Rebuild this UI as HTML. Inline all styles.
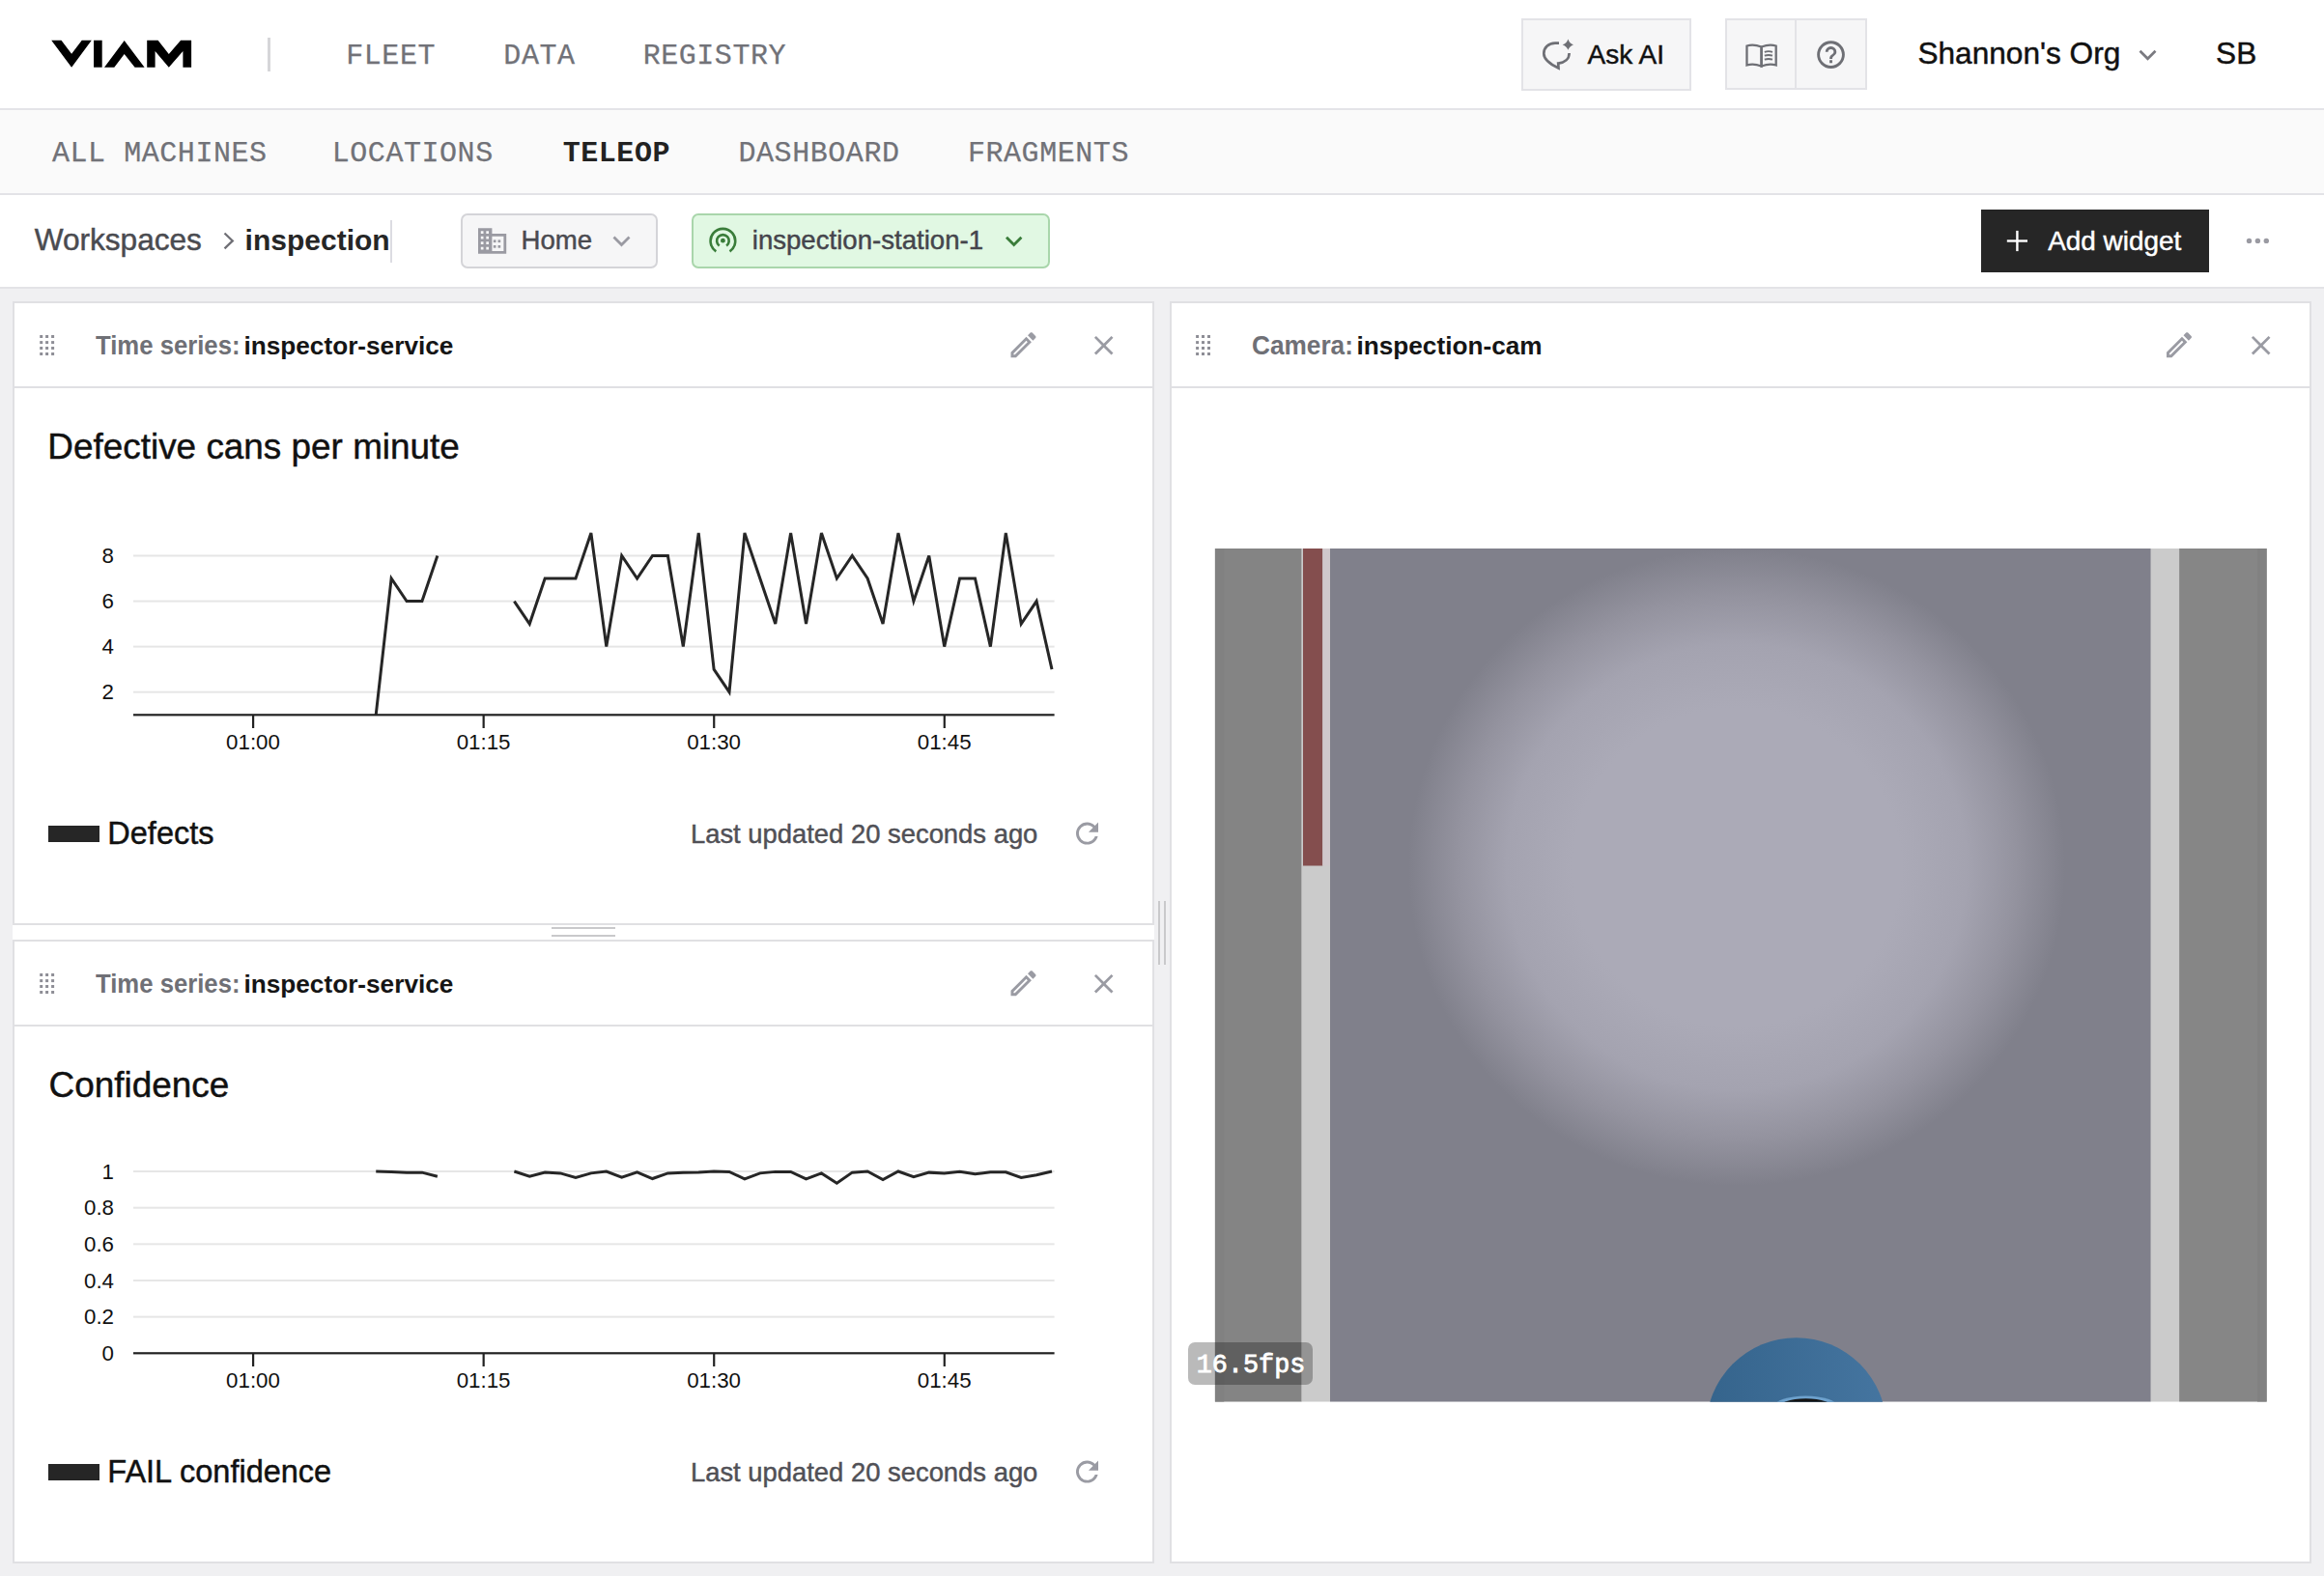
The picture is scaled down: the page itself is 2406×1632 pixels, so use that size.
<!DOCTYPE html>
<html><head><meta charset="utf-8"><title>Teleop</title>
<style>
html,body{margin:0;padding:0;width:2406px;height:1632px;overflow:hidden;background:#f0f0f2;}
.b{position:absolute;}
.t{position:absolute;white-space:pre;}
svg text{font-family:"Liberation Sans", sans-serif;}
</style></head><body>
<div class="b" style="left:0px;top:0px;width:2406px;height:112px;background:#fff"></div><div class="b" style="left:0px;top:112px;width:2406px;height:2px;background:#e4e4e8"></div><div class="b" style="left:0px;top:114px;width:2406px;height:86px;background:#fafafa"></div><div class="b" style="left:0px;top:200px;width:2406px;height:2px;background:#e3e3e7"></div><div class="b" style="left:0px;top:202px;width:2406px;height:95px;background:#fff"></div><div class="b" style="left:0px;top:297px;width:2406px;height:2px;background:#e3e3e7"></div><div class="b" style="left:0px;top:299px;width:2406px;height:1333px;background:#f0f0f2"></div><div class="b" style="left:13px;top:312px;width:1182px;height:646px;background:#fff;border:2px solid #e0e0e3;box-sizing:border-box"></div><div class="b" style="left:15px;top:400px;width:1178px;height:2px;background:#e0e0e3"></div><div class="b" style="left:13px;top:973px;width:1182px;height:646px;background:#fff;border:2px solid #e0e0e3;box-sizing:border-box"></div><div class="b" style="left:15px;top:1061px;width:1178px;height:2px;background:#e0e0e3"></div><div class="b" style="left:1211px;top:312px;width:1182px;height:1307px;background:#fff;border:2px solid #e0e0e3;box-sizing:border-box"></div><div class="b" style="left:1213px;top:400px;width:1178px;height:2px;background:#e0e0e3"></div><div class="b" style="left:13px;top:958px;width:1182px;height:15px;background:#fff"></div><div class="b" style="left:571px;top:960px;width:66px;height:2px;background:#c9c9cb"></div><div class="b" style="left:571px;top:968px;width:66px;height:2px;background:#c9c9cb"></div><div class="b" style="left:1199px;top:933px;width:2px;height:66px;background:#c9c9cb"></div><div class="b" style="left:1205px;top:933px;width:2px;height:66px;background:#c9c9cb"></div><div class="b" style="left:277px;top:39px;width:3px;height:35px;background:#d6d6d9"></div><div class="b" style="left:1575px;top:19px;width:176px;height:75px;background:#f6f6f7;border:2px solid #e3e3e7;box-sizing:border-box"></div><div class="b" style="left:1786px;top:19px;width:147px;height:74px;background:#f6f6f7;border:2px solid #e3e3e7;box-sizing:border-box"></div><div class="b" style="left:1858px;top:21px;width:2px;height:70px;background:#e3e3e7"></div><div class="b" style="left:404px;top:228px;width:2px;height:44px;background:#dcdce2"></div><div class="b" style="left:477px;top:221px;width:204px;height:57px;background:#f6f6f7;border:2px solid #d4d4d8;border-radius:7px;box-sizing:border-box"></div><div class="b" style="left:716px;top:221px;width:371px;height:57px;background:#e1f8e3;border:2px solid #a9d6ab;border-radius:7px;box-sizing:border-box"></div><div class="b" style="left:2051px;top:217px;width:236px;height:65px;background:#262626"></div><div class="b" style="left:50px;top:855px;width:53px;height:17px;background:#262626"></div><div class="b" style="left:50px;top:1516px;width:53px;height:17px;background:#262626"></div>
<svg width="2406" height="1632" viewBox="0 0 2406 1632" style="position:absolute;left:0;top:0">
<polygon fill="#000" points="53.2,41.75 63.5,41.75 74.1,55.7 84.75,41.75 94.8,41.75 74.1,69.7"/><rect fill="#000" x="97.06" y="41.75" width="8.64" height="27.95"/><polygon fill="#000" points="108.0,69.7 128.7,42.1 149.6,69.7 139.6,69.7 128.7,56 118.3,69.7"/><polygon fill="#000" points="152.2,69.7 152.2,41.75 163.6,41.75 174.8,56 187.1,41.75 198.1,41.75 198.1,69.7 189.4,69.7 189.4,52.9 174.8,69.7 160.6,52.9 160.6,69.7"/><g fill="none" stroke="#6e6f75" stroke-width="2.7" stroke-linejoin="miter"><path d="M1614,44.7 L1610,44.7 C1603,44.7 1598.3,49.5 1598.3,55.5 C1598.3,62 1605,66.5 1613.5,70.5 L1613.2,65.6 C1620,65 1624.6,61 1624.6,55"/></g><path fill="#6e6f75" d="M1623.4,40.4 Q1624.9,44.8 1629,46.3 Q1624.9,47.8 1623.4,51.8 Q1621.9,47.8 1617.6,46.3 Q1621.9,44.8 1623.4,40.4 Z"/><g fill="none" stroke="#6e6f75" stroke-width="2.3"><path d="M1808.5,47.5 Q1815.5,45.5 1823.5,48.5 L1823.5,68.5 Q1815.5,65.5 1808.5,67.5 Z"/><path d="M1838.7,47.5 Q1831.7,45.5 1823.7,48.5 L1823.7,68.5 Q1831.7,65.5 1838.7,67.5 Z"/><path d="M1826.8,53.8 Q1831,52.5 1835,53.8 M1826.8,57.7 Q1831,56.4 1835,57.7 M1826.8,61.6 Q1831,60.3 1835,61.6" stroke-width="1.9"/></g><g transform="translate(1878.3,39.4) scale(1.435)"><path fill="#6e6f75" d="M11,18H13V16H11V18M12,2A10,10 0 0,0 2,12A10,10 0 0,0 12,22A10,10 0 0,0 22,12A10,10 0 0,0 12,2M12,20C7.590,20 4,16.41 4,12C4,7.59 7.59,4 12,4C16.41,4 20,7.59 20,12C20,16.41 16.41,20 12,20M12,6A4,4 0 0,0 8,10H10A2,2 0 0,1 12,8A2,2 0 0,1 14,10C14,12 11,11.75 11,15H13C13,12.75 16,12.5 16,10A4,4 0 0,0 12,6Z"/></g><polyline fill="none" stroke="#7a7a80" stroke-width="2.7" points="2215.5,52.8 2223.5,60.8 2231.5,52.8"/><polyline fill="none" stroke="#707076" stroke-width="2.3" points="232.5,241.5 240.8,249.4 232.5,257.3"/><g fill="#9a9aa2"><path fill-rule="evenodd" d="M495,236.3 H509.4 V242 H524.2 V262.7 H495 Z M497.8,239.2 H500.5 V241.9 H497.8 Z M503.3,239.2 H506 V241.9 H503.3 Z M497.8,244.7 H500.5 V247.4 H497.8 Z M503.3,244.7 H506 V247.4 H503.3 Z M497.8,250.2 H500.5 V252.9 H497.8 Z M503.3,250.2 H506 V252.9 H503.3 Z M497.8,255.7 H500.5 V258.4 H497.8 Z M503.3,255.7 H506 V258.4 H503.3 Z M509.4,244.8 H521.4 V259.9 H509.4 Z"/><rect x="510.8" y="248.4" width="2.7" height="2.7"/><rect x="515.5" y="248.4" width="2.7" height="2.7"/><rect x="510.8" y="254" width="2.7" height="2.7"/><rect x="515.5" y="254" width="2.7" height="2.7"/></g><polyline fill="none" stroke="#9a9aa2" stroke-width="2.8" points="635.5,245.5 643.5,253.6 651.5,245.5"/><g fill="none" stroke="#3a7d3a" stroke-width="2.6" stroke-linecap="butt"><path d="M741.3,260.3 A12.8,12.8 0 1 1 755.5,260.3"/><path d="M744.7,254.5 A6.3,6.3 0 1 1 752.1,254.5"/></g><circle cx="748.4" cy="249.2" r="2.4" fill="#3a7d3a"/><polyline fill="none" stroke="#3a7d3a" stroke-width="2.9" points="1042,245.8 1049.7,253.5 1057.4,245.8"/><g stroke="#fff" stroke-width="2.4"><line x1="2077.8" y1="249.5" x2="2099" y2="249.5"/><line x1="2088.4" y1="238.9" x2="2088.4" y2="260.1"/></g><g fill="#9a9aa2"><circle cx="2328.5" cy="249.4" r="2.7"/><circle cx="2337.4" cy="249.4" r="2.7"/><circle cx="2346.3" cy="249.4" r="2.7"/></g><rect x="41.2" y="347.0" width="3" height="3" fill="#8e8e96"/><rect x="41.2" y="353.1" width="3" height="3" fill="#8e8e96"/><rect x="41.2" y="359.0" width="3" height="3" fill="#8e8e96"/><rect x="41.2" y="365.0" width="3" height="3" fill="#8e8e96"/><rect x="47.1" y="347.0" width="3" height="3" fill="#8e8e96"/><rect x="47.1" y="353.1" width="3" height="3" fill="#8e8e96"/><rect x="47.1" y="359.0" width="3" height="3" fill="#8e8e96"/><rect x="47.1" y="365.0" width="3" height="3" fill="#8e8e96"/><rect x="53.1" y="347.0" width="3" height="3" fill="#8e8e96"/><rect x="53.1" y="353.1" width="3" height="3" fill="#8e8e96"/><rect x="53.1" y="359.0" width="3" height="3" fill="#8e8e96"/><rect x="53.1" y="365.0" width="3" height="3" fill="#8e8e96"/><g transform="translate(1042.17,339.87) scale(1.4444)"><path fill="#9a9ba3" d="M14.06,9L15,9.94L5.92,19H5V18.08L14.06,9M17.66,3C17.41,3 17.15,3.1 16.96,3.29L15.13,5.12L18.88,8.87L20.71,7.04C21.1,6.65 21.1,6 20.71,5.63L18.37,3.29C18.17,3.09 17.92,3 17.66,3M14.06,6.19L3,17.25V21H6.75L17.81,9.94L14.06,6.19Z"/></g><g transform="translate(1125.90,340.90) scale(1.4000)"><path fill="#9a9ba3" d="M19,6.41L17.59,5L12,10.59L6.41,5L5,6.41L10.59,12L5,17.59L6.41,19L12,13.41L17.59,19L19,17.59L13.41,12L19,6.41Z"/></g><rect x="41.2" y="1008.0" width="3" height="3" fill="#8e8e96"/><rect x="41.2" y="1014.1" width="3" height="3" fill="#8e8e96"/><rect x="41.2" y="1020.0" width="3" height="3" fill="#8e8e96"/><rect x="41.2" y="1026.0" width="3" height="3" fill="#8e8e96"/><rect x="47.1" y="1008.0" width="3" height="3" fill="#8e8e96"/><rect x="47.1" y="1014.1" width="3" height="3" fill="#8e8e96"/><rect x="47.1" y="1020.0" width="3" height="3" fill="#8e8e96"/><rect x="47.1" y="1026.0" width="3" height="3" fill="#8e8e96"/><rect x="53.1" y="1008.0" width="3" height="3" fill="#8e8e96"/><rect x="53.1" y="1014.1" width="3" height="3" fill="#8e8e96"/><rect x="53.1" y="1020.0" width="3" height="3" fill="#8e8e96"/><rect x="53.1" y="1026.0" width="3" height="3" fill="#8e8e96"/><g transform="translate(1042.17,1000.87) scale(1.4444)"><path fill="#9a9ba3" d="M14.06,9L15,9.94L5.92,19H5V18.08L14.06,9M17.66,3C17.41,3 17.15,3.1 16.96,3.29L15.13,5.12L18.88,8.87L20.71,7.04C21.1,6.65 21.1,6 20.71,5.63L18.37,3.29C18.17,3.09 17.92,3 17.66,3M14.06,6.19L3,17.25V21H6.75L17.81,9.94L14.06,6.19Z"/></g><g transform="translate(1125.90,1001.90) scale(1.4000)"><path fill="#9a9ba3" d="M19,6.41L17.59,5L12,10.59L6.41,5L5,6.41L10.59,12L5,17.59L6.41,19L12,13.41L17.59,19L19,17.59L13.41,12L19,6.41Z"/></g><rect x="1238.1" y="347.0" width="3" height="3" fill="#8e8e96"/><rect x="1238.1" y="353.1" width="3" height="3" fill="#8e8e96"/><rect x="1238.1" y="359.0" width="3" height="3" fill="#8e8e96"/><rect x="1238.1" y="365.0" width="3" height="3" fill="#8e8e96"/><rect x="1244.0" y="347.0" width="3" height="3" fill="#8e8e96"/><rect x="1244.0" y="353.1" width="3" height="3" fill="#8e8e96"/><rect x="1244.0" y="359.0" width="3" height="3" fill="#8e8e96"/><rect x="1244.0" y="365.0" width="3" height="3" fill="#8e8e96"/><rect x="1250.0" y="347.0" width="3" height="3" fill="#8e8e96"/><rect x="1250.0" y="353.1" width="3" height="3" fill="#8e8e96"/><rect x="1250.0" y="359.0" width="3" height="3" fill="#8e8e96"/><rect x="1250.0" y="365.0" width="3" height="3" fill="#8e8e96"/><g transform="translate(2238.67,339.87) scale(1.4444)"><path fill="#9a9ba3" d="M14.06,9L15,9.94L5.92,19H5V18.08L14.06,9M17.66,3C17.41,3 17.15,3.1 16.96,3.29L15.13,5.12L18.88,8.87L20.71,7.04C21.1,6.65 21.1,6 20.71,5.63L18.37,3.29C18.17,3.09 17.92,3 17.66,3M14.06,6.19L3,17.25V21H6.75L17.81,9.94L14.06,6.19Z"/></g><g transform="translate(2323.90,340.90) scale(1.4000)"><path fill="#9a9ba3" d="M19,6.41L17.59,5L12,10.59L6.41,5L5,6.41L10.59,12L5,17.59L6.41,19L12,13.41L17.59,19L19,17.59L13.41,12L19,6.41Z"/></g><rect x="138" y="715.67" width="953.6" height="2" fill="#e6e6e6"/><text x="118" y="724.27" text-anchor="end" font-size="22.3" fill="#111">2</text><rect x="138" y="668.61" width="953.6" height="2" fill="#e6e6e6"/><text x="118" y="677.21" text-anchor="end" font-size="22.3" fill="#111">4</text><rect x="138" y="621.55" width="953.6" height="2" fill="#e6e6e6"/><text x="118" y="630.15" text-anchor="end" font-size="22.3" fill="#111">6</text><rect x="138" y="574.49" width="953.6" height="2" fill="#e6e6e6"/><text x="118" y="583.09" text-anchor="end" font-size="22.3" fill="#111">8</text><rect x="138" y="739.20" width="953.6" height="2.2" fill="#222"/><rect x="261.00" y="740.00" width="2.2" height="14" fill="#222"/><text x="262.00" y="775.60" text-anchor="middle" font-size="22.3" fill="#111">01:00</text><rect x="499.56" y="740.00" width="2.2" height="14" fill="#222"/><text x="500.56" y="775.60" text-anchor="middle" font-size="22.3" fill="#111">01:15</text><rect x="738.12" y="740.00" width="2.2" height="14" fill="#222"/><text x="739.12" y="775.60" text-anchor="middle" font-size="22.3" fill="#111">01:30</text><rect x="976.68" y="740.00" width="2.2" height="14" fill="#222"/><text x="977.68" y="775.60" text-anchor="middle" font-size="22.3" fill="#111">01:45</text><polyline fill="none" stroke="#262626" stroke-width="3" stroke-linejoin="miter" stroke-miterlimit="4" points="389.23,740.20 405.14,599.02 421.04,622.55 436.94,622.55 452.85,575.49"/><polyline fill="none" stroke="#262626" stroke-width="3" stroke-linejoin="miter" stroke-miterlimit="4" points="532.37,622.55 548.27,646.08 564.18,599.02 580.08,599.02 595.98,599.02 611.89,551.96 627.79,669.61 643.70,575.49 659.60,599.02 675.50,575.49 691.41,575.49 707.31,669.61 723.22,551.96 739.12,693.14 755.02,716.67 770.93,551.96 786.83,599.02 802.74,646.08 818.64,551.96 834.54,646.08 850.45,551.96 866.35,599.02 882.26,575.49 898.16,599.02 914.06,646.08 929.97,551.96 945.87,622.55 961.78,575.49 977.68,669.61 993.58,599.02 1009.49,599.02 1025.39,669.61 1041.30,551.96 1057.20,646.08 1073.10,622.55 1089.01,693.14"/><g transform="translate(1108.25,845.85) scale(1.4375)"><path fill="#9a9ba3" d="M17.65,6.35C16.2,4.9 14.21,4 12,4A8,8 0 0,0 4,12A8,8 0 0,0 12,20C15.73,20 18.84,17.450 19.73,14H17.65C16.83,16.33 14.61,18 12,18A6,6 0 0,1 6,12A6,6 0 0,1 12,6C13.66,6 15.14,6.69 16.22,7.78L13,11H20V4L17.65,6.35Z"/></g><text x="118" y="1408.90" text-anchor="end" font-size="22.3" fill="#111">0</text><rect x="138" y="1362.64" width="953.6" height="2" fill="#e6e6e6"/><text x="118" y="1371.24" text-anchor="end" font-size="22.3" fill="#111">0.2</text><rect x="138" y="1324.98" width="953.6" height="2" fill="#e6e6e6"/><text x="118" y="1333.58" text-anchor="end" font-size="22.3" fill="#111">0.4</text><rect x="138" y="1287.32" width="953.6" height="2" fill="#e6e6e6"/><text x="118" y="1295.92" text-anchor="end" font-size="22.3" fill="#111">0.6</text><rect x="138" y="1249.66" width="953.6" height="2" fill="#e6e6e6"/><text x="118" y="1258.26" text-anchor="end" font-size="22.3" fill="#111">0.8</text><rect x="138" y="1212.00" width="953.6" height="2" fill="#e6e6e6"/><text x="118" y="1220.60" text-anchor="end" font-size="22.3" fill="#111">1</text><rect x="138" y="1400.20" width="953.6" height="2.2" fill="#222"/><rect x="261.00" y="1401.00" width="2.2" height="14" fill="#222"/><text x="262.00" y="1436.60" text-anchor="middle" font-size="22.3" fill="#111">01:00</text><rect x="499.56" y="1401.00" width="2.2" height="14" fill="#222"/><text x="500.56" y="1436.60" text-anchor="middle" font-size="22.3" fill="#111">01:15</text><rect x="738.12" y="1401.00" width="2.2" height="14" fill="#222"/><text x="739.12" y="1436.60" text-anchor="middle" font-size="22.3" fill="#111">01:30</text><rect x="976.68" y="1401.00" width="2.2" height="14" fill="#222"/><text x="977.68" y="1436.60" text-anchor="middle" font-size="22.3" fill="#111">01:45</text><polyline fill="none" stroke="#262626" stroke-width="3" stroke-linejoin="miter" stroke-miterlimit="4" points="389.23,1213.00 405.14,1213.38 421.04,1214.13 436.94,1214.13 452.85,1218.27"/><polyline fill="none" stroke="#262626" stroke-width="3" stroke-linejoin="miter" stroke-miterlimit="4" points="532.37,1213.00 548.27,1218.27 564.18,1213.94 580.08,1214.88 595.98,1219.40 611.89,1214.88 627.79,1213.00 643.70,1219.21 659.60,1213.94 675.50,1220.53 691.41,1214.88 707.31,1214.32 723.22,1213.94 739.12,1213.00 755.02,1213.38 770.93,1220.91 786.83,1214.88 802.74,1213.38 818.64,1213.38 834.54,1220.91 850.45,1214.88 866.35,1225.24 882.26,1214.13 898.16,1213.00 914.06,1221.47 929.97,1213.00 945.87,1218.65 961.78,1214.13 977.68,1214.88 993.58,1213.38 1009.49,1215.82 1025.39,1213.75 1041.30,1213.75 1057.20,1219.40 1073.10,1216.77 1089.01,1213.00"/><g transform="translate(1108.25,1506.85) scale(1.4375)"><path fill="#9a9ba3" d="M17.65,6.35C16.2,4.9 14.21,4 12,4A8,8 0 0,0 4,12A8,8 0 0,0 12,20C15.73,20 18.84,17.450 19.73,14H17.65C16.83,16.33 14.61,18 12,18A6,6 0 0,1 6,12A6,6 0 0,1 12,6C13.66,6 15.14,6.69 16.22,7.78L13,11H20V4L17.65,6.35Z"/></g><defs><radialGradient id="glow" cx="0.5" cy="0.5" r="0.5"><stop offset="0" stop-color="#abaab7"/><stop offset="0.5" stop-color="#abaab7"/><stop offset="0.7" stop-color="#a4a3b0"/><stop offset="0.85" stop-color="#94939f"/><stop offset="1" stop-color="#80808b"/></radialGradient><linearGradient id="disk" x1="1766" y1="0" x2="1953" y2="0" gradientUnits="userSpaceOnUse"><stop offset="0" stop-color="#35648c"/><stop offset="1" stop-color="#4575a0"/></linearGradient><clipPath id="camclip"><rect x="1257.7" y="568" width="1089.1" height="883.7"/></clipPath></defs><g clip-path="url(#camclip)"><rect x="1257.7" y="568" width="90" height="883.7" fill="#848484"/><rect x="1347.7" y="568" width="29.3" height="883.7" fill="#cbcbcb"/><rect x="1349" y="568" width="20.3" height="328.5" fill="#844e4e"/><rect x="1369.3" y="568" width="7.7" height="328.5" fill="#d0c8cc"/><rect x="1377" y="568" width="849.8" height="883.7" fill="#80808b"/><rect x="1257.7" y="568" width="9.5" height="883.7" fill="#818181"/><ellipse cx="1798" cy="898" rx="340" ry="330" fill="url(#glow)"/><rect x="2226.8" y="568" width="29.3" height="883.7" fill="#cbcbcb"/><rect x="2256.1" y="568" width="90.7" height="883.7" fill="#868686"/><rect x="2337" y="568" width="9.8" height="883.7" fill="#818181"/><circle cx="1859.7" cy="1478.5" r="93.3" fill="url(#disk)"/><ellipse cx="1869.5" cy="1456.6" rx="33" ry="11" fill="#75aad6" fill-opacity="0.85"/><ellipse cx="1869.5" cy="1458.6" rx="29" ry="10.3" fill="#141414"/></g><rect x="1230" y="1390" width="129" height="44" rx="7" fill="#000" fill-opacity="0.27"/>
</svg>
<div class="t" style="left:358.26px;top:42.92px;font-size:30.0px;line-height:30.0px;font-weight:400;color:#717278;font-family:'Liberation Mono', monospace;letter-spacing:0.55px;-webkit-text-stroke:0.25px #717278;">FLEET</div><div class="t" style="left:521.33px;top:42.92px;font-size:30.0px;line-height:30.0px;font-weight:400;color:#717278;font-family:'Liberation Mono', monospace;letter-spacing:0.55px;-webkit-text-stroke:0.25px #717278;">DATA</div><div class="t" style="left:665.63px;top:42.92px;font-size:30.0px;line-height:30.0px;font-weight:400;color:#717278;font-family:'Liberation Mono', monospace;letter-spacing:0.55px;-webkit-text-stroke:0.25px #717278;">REGISTRY</div><div class="t" style="left:1643.55px;top:42.59px;font-size:28px;line-height:28px;font-weight:400;color:#111;font-family:'Liberation Sans', sans-serif;-webkit-text-stroke:0.45px #111;">Ask AI</div><div class="t" style="left:1985.47px;top:40.04px;font-size:31.6px;line-height:31.6px;font-weight:400;color:#111;font-family:'Liberation Sans', sans-serif;-webkit-text-stroke:0.45px #111;">Shannon's Org</div><div class="t" style="left:2294.07px;top:40.04px;font-size:31.6px;line-height:31.6px;font-weight:400;color:#111;font-family:'Liberation Sans', sans-serif;-webkit-text-stroke:0.45px #111;">SB</div><div class="t" style="left:54.00px;top:144.22px;font-size:30.0px;line-height:30.0px;font-weight:400;color:#717278;font-family:'Liberation Mono', monospace;letter-spacing:0.55px;-webkit-text-stroke:0.25px #717278;">ALL MACHINES</div><div class="t" style="left:343.73px;top:144.22px;font-size:30.0px;line-height:30.0px;font-weight:400;color:#717278;font-family:'Liberation Mono', monospace;letter-spacing:0.55px;-webkit-text-stroke:0.25px #717278;">LOCATIONS</div><div class="t" style="left:582.71px;top:144.22px;font-size:30.0px;line-height:30.0px;font-weight:700;color:#222;font-family:'Liberation Mono', monospace;letter-spacing:0.55px;">TELEOP</div><div class="t" style="left:764.53px;top:144.22px;font-size:30.0px;line-height:30.0px;font-weight:400;color:#717278;font-family:'Liberation Mono', monospace;letter-spacing:0.55px;-webkit-text-stroke:0.25px #717278;">DASHBOARD</div><div class="t" style="left:1001.96px;top:144.22px;font-size:30.0px;line-height:30.0px;font-weight:400;color:#717278;font-family:'Liberation Mono', monospace;letter-spacing:0.55px;-webkit-text-stroke:0.25px #717278;">FRAGMENTS</div><div class="t" style="left:35.66px;top:233.14px;font-size:31.6px;line-height:31.6px;font-weight:400;color:#4a4b50;font-family:'Liberation Sans', sans-serif;-webkit-text-stroke:0.45px #4a4b50;">Workspaces</div><div class="t" style="left:253.61px;top:234.40px;font-size:30.0px;line-height:30.0px;font-weight:700;color:#262626;font-family:'Liberation Sans', sans-serif;">inspection</div><div class="t" style="left:539.54px;top:235.13px;font-size:27.6px;line-height:27.6px;font-weight:400;color:#4a4a50;font-family:'Liberation Sans', sans-serif;-webkit-text-stroke:0.45px #4a4a50;">Home</div><div class="t" style="left:778.75px;top:235.43px;font-size:27.6px;line-height:27.6px;font-weight:400;color:#45454c;font-family:'Liberation Sans', sans-serif;-webkit-text-stroke:0.45px #45454c;">inspection-station-1</div><div class="t" style="left:2120.25px;top:235.68px;font-size:27.9px;line-height:27.9px;font-weight:400;color:#fff;font-family:'Liberation Sans', sans-serif;-webkit-text-stroke:0.45px #fff;">Add widget</div><div class="t" style="left:98.99px;top:344.23px;font-size:27.6px;line-height:27.6px;font-weight:700;color:#6f7076;font-family:'Liberation Sans', sans-serif;transform:scaleX(0.931);transform-origin:0 0;">Time series:</div><div class="t" style="left:252.47px;top:344.82px;font-size:26.2px;line-height:26.2px;font-weight:700;color:#151515;font-family:'Liberation Sans', sans-serif;">inspector-service</div><div class="t" style="left:98.99px;top:1005.23px;font-size:27.6px;line-height:27.6px;font-weight:700;color:#6f7076;font-family:'Liberation Sans', sans-serif;transform:scaleX(0.931);transform-origin:0 0;">Time series:</div><div class="t" style="left:252.47px;top:1005.82px;font-size:26.2px;line-height:26.2px;font-weight:700;color:#151515;font-family:'Liberation Sans', sans-serif;">inspector-service</div><div class="t" style="left:1296.17px;top:344.23px;font-size:27.6px;line-height:27.6px;font-weight:700;color:#6f7076;font-family:'Liberation Sans', sans-serif;transform:scaleX(0.95);transform-origin:0 0;">Camera:</div><div class="t" style="left:1404.47px;top:344.82px;font-size:26.2px;line-height:26.2px;font-weight:700;color:#151515;font-family:'Liberation Sans', sans-serif;">inspection-cam</div><div class="t" style="left:49.37px;top:445.36px;font-size:36.9px;line-height:36.9px;font-weight:400;color:#111;font-family:'Liberation Sans', sans-serif;-webkit-text-stroke:0.45px #111;">Defective cans per minute</div><div class="t" style="left:111.33px;top:847.28px;font-size:32.5px;line-height:32.5px;font-weight:400;color:#111;font-family:'Liberation Sans', sans-serif;-webkit-text-stroke:0.45px #111;">Defects</div><div class="t" style="left:714.95px;top:849.80px;font-size:27.4px;line-height:27.4px;font-weight:400;color:#505056;font-family:'Liberation Sans', sans-serif;-webkit-text-stroke:0.45px #505056;">Last updated 20 seconds ago</div><div class="t" style="left:50.53px;top:1106.36px;font-size:36.9px;line-height:36.9px;font-weight:400;color:#111;font-family:'Liberation Sans', sans-serif;-webkit-text-stroke:0.45px #111;">Confidence</div><div class="t" style="left:111.33px;top:1508.28px;font-size:32.5px;line-height:32.5px;font-weight:400;color:#111;font-family:'Liberation Sans', sans-serif;-webkit-text-stroke:0.45px #111;">FAIL confidence</div><div class="t" style="left:714.95px;top:1510.80px;font-size:27.4px;line-height:27.4px;font-weight:400;color:#505056;font-family:'Liberation Sans', sans-serif;-webkit-text-stroke:0.45px #505056;">Last updated 20 seconds ago</div><div class="t" style="left:1238.76px;top:1400.97px;font-size:26.8px;line-height:26.8px;font-weight:400;color:#fff;font-family:'Liberation Mono', monospace;-webkit-text-stroke:0.8px #fff;">16.5fps</div>
</body></html>
